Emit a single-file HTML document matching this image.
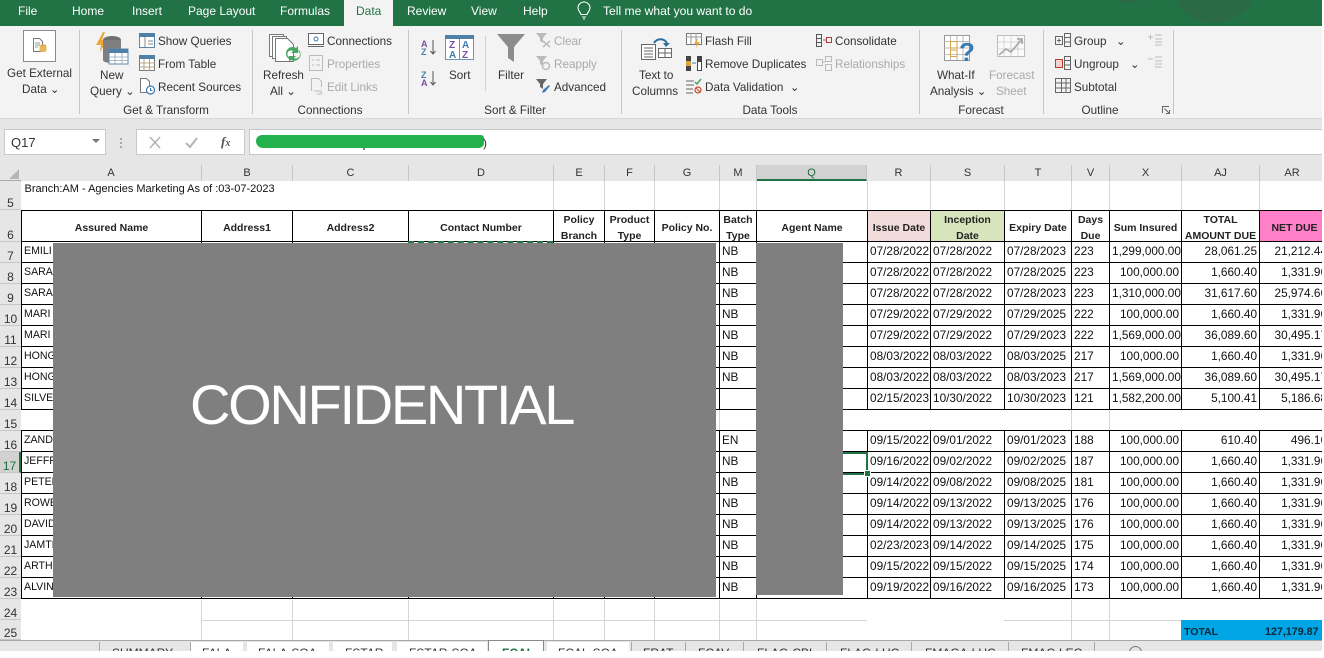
<!DOCTYPE html>
<html><head><meta charset="utf-8"><style>
html,body{margin:0;padding:0;background:#fff}
#p{position:relative;width:1324px;height:658px;overflow:hidden;background:#fff;font-family:"Liberation Sans",sans-serif;color:#222}
.a{position:absolute}
.t{position:absolute;white-space:nowrap;font-size:11.7px;line-height:16px;color:#333;margin-top:1px}
.m0{margin-top:0}
.g{color:#aaa}
.c{text-align:center;transform:translateX(-50%)}
.w{color:#fff;font-size:12px;margin-top:0}
.sep{position:absolute;top:30px;height:84px;width:1px;background:#c6c6c6}
svg{position:absolute;overflow:visible}
table{position:absolute;left:21px;top:181px;border-collapse:collapse;table-layout:fixed;width:1308px;font-size:11.8px;color:#111}
td{padding:0 2px;height:20px;line-height:16px;vertical-align:top;white-space:nowrap;overflow:hidden;border:1px solid #000}
tr:nth-child(n+3) td{padding-top:1px;height:19px}
tr:nth-child(n+3) td:first-child{font-size:10.6px}
tr.h td{height:30px;font-weight:bold;text-align:center;vertical-align:middle;color:#222;white-space:normal;font-size:10.5px;padding:0}
tr.h td div{line-height:16px;margin-bottom:-2px;position:relative;top:1px}
td.r{text-align:right}
tr.e td{border-left:1px solid #d4d4d4;border-right:1px solid #d4d4d4}
.ch{position:absolute;top:165px;height:16px;background:#e6e6e6;border-right:1px solid #c6c6c6;font-size:11px;line-height:16px;text-align:center;color:#333;box-sizing:border-box}
.rn{position:absolute;left:0;width:21px;background:#e6e6e6;border-bottom:1px solid #c6c6c6;font-size:12px;text-align:center;color:#333;box-sizing:border-box;line-height:14px}
.tab{position:absolute;top:646px;font-size:12px;line-height:14px;color:#333;white-space:nowrap}
</style></head><body><div id="p">

<!-- title bar -->
<div class="a" style="left:0;top:0;width:1324px;height:26px;background:#217346;overflow:hidden">
<div class="a" style="left:1170px;top:-65px;width:88px;height:88px;border-radius:50%;background:#2a6a45"></div>
<div class="a" style="left:1117px;top:-10px;width:26px;height:13px;border-radius:50%;background:#2a6a45"></div>
</div>
<div class="a" style="left:344px;top:0;width:49px;height:26px;background:#f3f3f3"></div>
<div class="t w" style="left:18px;top:3px">File</div>
<div class="t w" style="left:72px;top:3px">Home</div>
<div class="t w" style="left:132px;top:3px">Insert</div>
<div class="t w" style="left:188px;top:3px">Page Layout</div>
<div class="t w" style="left:280px;top:3px">Formulas</div>
<div class="t m0" style="left:356px;top:3px;color:#217346;font-size:12px">Data</div>
<div class="t w" style="left:407px;top:3px">Review</div>
<div class="t w" style="left:471px;top:3px">View</div>
<div class="t w" style="left:523px;top:3px">Help</div>
<svg style="left:577px;top:2px" width="14" height="18" viewBox="0 0 14 18" fill="none" stroke="#fff" stroke-width="1.1"><path d="M4 12.500C3.500 10 1 9 1 6a6 6 0 0 1 12 0c0 3-2.500 4-3 6.500H4zM5 15h4M6 17h2"/></svg>
<div class="t w" style="left:603px;top:3px;font-size:12.100px">Tell me what you want to do</div>

<!-- ribbon -->
<div class="a" style="left:0;top:26px;width:1324px;height:92px;background:#f3f3f3;border-bottom:1px solid #d8d8d8"></div>
<div class="a" style="left:0;top:119px;width:1324px;height:46px;background:#e6e6e6"></div>
<div class="sep" style="left:79px"></div><div class="sep" style="left:252px"></div><div class="sep" style="left:408px"></div><div class="sep" style="left:621px"></div><div class="sep" style="left:919px"></div><div class="sep" style="left:1043px"></div><div class="sep" style="left:1173px"></div>
<div class="a" style="left:485px;top:36px;width:1px;height:55px;background:#d0d0d0"></div>

<!-- Get External -->
<div class="a" style="left:23px;top:30px;width:31px;height:30px;background:#fff;border:1px solid #8a8a8a"></div>
<svg style="left:33px;top:38px" width="14" height="15" viewBox="0 0 14 15"><path d="M.5.500h6l3 3v10h-9z" fill="#fff" stroke="#777"/><path d="M2 5h5M2 7h5M2 9h3" stroke="#999"/><ellipse cx="10" cy="8" rx="3.500" ry="1.500" fill="#d9a441"/><path d="M6.500 8v4.500c0 2 7 2 7 0V8z" fill="#e3b85c"/></svg>
<div class="t" style="left:7px;top:65px">Get External</div>
<div class="t" style="left:22px;top:81px">Data ⌄</div>

<!-- New Query -->
<svg style="left:95px;top:32px" width="34" height="36" viewBox="0 0 34 36"><path d="M8 0L1 13h5l-1 7 7-12H7l3-8z" fill="#eba93a"/><ellipse cx="17" cy="8" rx="9" ry="4" fill="#6f6f6f"/><path d="M8 8v20c0 4 18 4 18 0V8z" fill="#7f7f7f"/><rect x="14" y="17" width="19" height="15" fill="#fff" stroke="#5b87ae"/><rect x="14" y="17" width="19" height="4" fill="#4f81a8"/><path d="M14 25h19M14 28.500h19M20 21v11M27 21v11" stroke="#90a8bd" stroke-width=".8"/></svg>
<div class="t" style="left:100px;top:67px">New</div>
<div class="t" style="left:90px;top:83px">Query ⌄</div>
<svg style="left:139px;top:33px" width="16" height="15" viewBox="0 0 16 15"><rect x=".5" y=".5" width="15" height="14" fill="#fff" stroke="#5f86a8"/><rect x="0" y="0" width="16" height="4" fill="#4f81a8"/><path d="M6 4v10M9 8h5M9 11h5" stroke="#888"/></svg>
<div class="t" style="left:158px;top:33px">Show Queries</div>
<svg style="left:139px;top:55px" width="16" height="16" viewBox="0 0 16 16"><rect x=".5" y=".5" width="15" height="15" fill="#fff" stroke="#7a7a7a"/><rect x="0" y="0" width="16" height="4" fill="#4f81a8"/><path d="M0 8h16M0 12h16M5 4v12M10.500 4v12" stroke="#a98d6a" stroke-width=".8"/></svg>
<div class="t" style="left:158px;top:56px">From Table</div>
<svg style="left:140px;top:78px" width="15" height="17" viewBox="0 0 15 17" fill="none"><path d="M.5.500h6l3 3v11H.5z" stroke="#777" fill="#fff"/><circle cx="10.500" cy="12" r="4" fill="#fff" stroke="#3a7ab5" stroke-width="1.200"/><path d="M10.500 10v2.500h2" stroke="#3a7ab5"/></svg>
<div class="t" style="left:158px;top:79px">Recent Sources</div>
<div class="t c" style="left:166px;top:102px">Get &amp; Transform</div>

<!-- Refresh -->
<svg style="left:269px;top:33px" width="32" height="30" viewBox="0 0 32 30" fill="#fff" stroke="#777"><path d="M.5 1.500h14v22H.5z"/><path d="M3.500 3.500h14v22h-14z"/><path d="M6.500 5.500h12l6 6v17h-18z"/><path d="M20 26a6.500 6.500 0 0 1 7-11l2-2v7h-7l2-2a3.500 3.500 0 0 0-4 6z" fill="#4aa564" stroke="none"/><path d="M30 17a6.500 6.500 0 0 1-8 10l-2 2v-6h7l-2 2a3.500 3.500 0 0 0 4-7z" fill="#4aa564" stroke="none"/></svg>
<div class="t" style="left:263px;top:67px">Refresh</div>
<div class="t" style="left:270px;top:83px">All ⌄</div>
<svg style="left:308px;top:33px" width="16" height="15" viewBox="0 0 16 15" fill="none"><rect x=".5" y=".5" width="15" height="11" fill="#fff" stroke="#666"/><circle cx="8" cy="6" r="2" stroke="#3a7ab5"/><path d="M0 13.500h16" stroke="#666"/></svg>
<div class="t" style="left:327px;top:33px">Connections</div>
<svg style="left:309px;top:55px" width="14" height="16" viewBox="0 0 14 16" fill="none" stroke="#bbb"><rect x=".5" y=".5" width="13" height="15"/><path d="M3 5h2M7 5h4M3 10h2M7 10h4"/></svg>
<div class="t g" style="left:327px;top:56px">Properties</div>
<svg style="left:311px;top:78px" width="13" height="17" viewBox="0 0 13 17" fill="none" stroke="#bbb"><path d="M.5 13V.500h7l3 3V9M3 13h7a2 2 0 0 1 0 3H6"/></svg>
<div class="t g" style="left:327px;top:79px">Edit Links</div>
<div class="t c" style="left:330px;top:102px">Connections</div>

<!-- Sort -->
<svg style="left:421px;top:39px" width="16" height="17" viewBox="0 0 16 17"><text x="0" y="8" font-size="9" font-weight="bold" fill="#7a4fa3" font-family="Liberation Sans">A</text><text x="0" y="16" font-size="9" font-weight="bold" fill="#4a7fb0" font-family="Liberation Sans">Z</text><path d="M12 1v14M9.500 12l2.500 3 2.500-3" stroke="#555" fill="none"/></svg>
<svg style="left:421px;top:70px" width="16" height="17" viewBox="0 0 16 17"><text x="0" y="8" font-size="9" font-weight="bold" fill="#4a7fb0" font-family="Liberation Sans">Z</text><text x="0" y="16" font-size="9" font-weight="bold" fill="#7a4fa3" font-family="Liberation Sans">A</text><path d="M12 1v14M9.500 12l2.500 3 2.500-3" stroke="#555" fill="none"/></svg>
<svg style="left:445px;top:35px" width="29" height="25" viewBox="0 0 29 25"><rect x=".5" y=".5" width="28" height="24" fill="#fff" stroke="#6f94b5"/><rect width="29" height="4" fill="#4f81a8"/><path d="M14.500 4v21" stroke="#6f94b5"/><g font-family="Liberation Sans" font-size="10" font-weight="bold"><text x="4" y="13" fill="#7a4fa3">Z</text><text x="4" y="23" fill="#3f7cb3">A</text><text x="17" y="13" fill="#3f7cb3">A</text><text x="17" y="23" fill="#7a4fa3">Z</text></g></svg>
<div class="t" style="left:449px;top:67px">Sort</div>

<!-- Filter -->
<svg style="left:497px;top:34px" width="28" height="28" viewBox="0 0 28 28"><path d="M0 0h28L17 13v15l-6-4V13z" fill="#8c8c8c"/></svg>
<div class="t" style="left:498px;top:67px">Filter</div>
<svg style="left:536px;top:33px" width="15" height="15" viewBox="0 0 15 15"><path d="M0 0h11L7 5v5L4 8V5z" fill="#bbb"/><path d="M7 8l7 6M14 8l-7 6" stroke="#bbb" stroke-width="1.500"/></svg>
<div class="t g" style="left:554px;top:33px">Clear</div>
<svg style="left:536px;top:56px" width="15" height="15" viewBox="0 0 15 15"><path d="M0 0h11L7 5v5L4 8V5z" fill="#bbb"/><circle cx="10" cy="10" r="3.500" fill="none" stroke="#bbb" stroke-width="1.500"/></svg>
<div class="t g" style="left:554px;top:56px">Reapply</div>
<svg style="left:536px;top:79px" width="15" height="15" viewBox="0 0 15 15"><path d="M0 0h11L7 5v5L4 8V5z" fill="#666"/><path d="M6 14l1-3 6-5 1 1-5 6z" fill="#3a7ab5"/></svg>
<div class="t" style="left:554px;top:79px">Advanced</div>
<div class="t c" style="left:515px;top:102px">Sort &amp; Filter</div>

<!-- Text to columns -->
<svg style="left:641px;top:34px" width="31" height="26" viewBox="0 0 31 26" fill="none"><path d="M13 9a7.500 7.500 0 0 1 13 0" stroke="#2f6f9f" stroke-width="2"/><path d="M22 9h7l-4 4z" fill="#2f6f9f"/><rect x=".5" y="10.500" width="14" height="15" fill="#fff" stroke="#666"/><path d="M3 14h9M3 17h9M3 20h9M3 23h9" stroke="#666"/><rect x="17.500" y="14.500" width="13" height="9" stroke="#666" fill="#fff"/><path d="M17.500 19h13M24 14.500v9" stroke="#666"/></svg>
<div class="t" style="left:639px;top:67px">Text to</div>
<div class="t" style="left:632px;top:83px">Columns</div>
<svg style="left:686px;top:33px" width="16" height="15" viewBox="0 0 16 15" fill="none"><rect x=".5" y=".5" width="15" height="11" fill="#fff" stroke="#777"/><path d="M0 4h16M5 0v11M10 0v11" stroke="#999"/><path d="M11 6L8 11h3l-1 4 4-6h-3l1-3z" fill="#eba93a"/></svg>
<div class="t" style="left:705px;top:33px">Flash Fill</div>
<svg style="left:686px;top:56px" width="16" height="15" viewBox="0 0 16 15"><rect x="0" y="0" width="5" height="15" fill="#444"/><rect x="0" y="5" width="5" height="5" fill="#d9a441"/><rect x="11" y="0" width="5" height="15" fill="#444"/><rect x="12" y="6" width="3" height="8" fill="#fff"/><path d="M6 7h4" stroke="#3a7ab5"/></svg>
<div class="t" style="left:705px;top:56px">Remove Duplicates</div>
<svg style="left:686px;top:78px" width="16" height="16" viewBox="0 0 16 16" fill="none"><path d="M0 3h8M0 7h8M0 11h7M0 15h7" stroke="#666"/><path d="M9 4l2 2 4-5" stroke="#4aa564" stroke-width="1.500"/><circle cx="12" cy="12" r="3" stroke="#d0432b" stroke-width="1.200"/><path d="M10 10l4 4" stroke="#d0432b"/></svg>
<div class="t" style="left:705px;top:79px">Data Validation &nbsp;⌄</div>
<div class="t c" style="left:770px;top:102px">Data Tools</div>
<svg style="left:816px;top:34px" width="16" height="13" viewBox="0 0 16 13" fill="none"><rect x=".5" y=".5" width="5" height="12" stroke="#555"/><path d="M0 4.500h6M0 8.500h6" stroke="#555"/><rect x="10.500" y="3.500" width="5" height="5" stroke="#c0392b"/><path d="M7 6h3" stroke="#3a7ab5"/></svg>
<div class="t" style="left:835px;top:33px">Consolidate</div>
<svg style="left:816px;top:56px" width="16" height="15" viewBox="0 0 16 15" fill="none" stroke="#bbb"><rect x=".5" y="3.500" width="6" height="6"/><rect x="9.500" y=".5" width="6" height="5"/><rect x="9.500" y="8.500" width="6" height="6"/><path d="M7 6h2"/></svg>
<div class="t g" style="left:835px;top:56px">Relationships</div>

<!-- Forecast -->
<svg style="left:944px;top:35px" width="30" height="29" viewBox="0 0 30 29" fill="none"><rect x=".5" y=".5" width="25" height="25" fill="#fff" stroke="#999"/><path d="M0 6.500h25M0 13h25M0 19.500h25M6.500 0v25M13 0v25M19 0v25" stroke="#aaa" stroke-width=".8"/><rect x="6.500" y="6.500" width="6.500" height="6.500" stroke="#d9a441"/><rect x="6.500" y="15" width="6.500" height="6.500" stroke="#d9a441"/><text x="15" y="26" font-size="26" font-weight="bold" fill="#3a7ab5" font-family="Liberation Sans">?</text></svg>
<div class="t" style="left:937px;top:67px">What-If</div>
<div class="t" style="left:930px;top:83px">Analysis ⌄</div>
<svg style="left:997px;top:35px" width="28" height="25" viewBox="0 0 28 25" fill="none"><rect x=".5" y=".5" width="27" height="21" fill="#fafafa" stroke="#bbb"/><path d="M0 7h27M0 14h27M7 0v21M14 0v21M21 0v21" stroke="#ccc" stroke-width=".8"/><path d="M2 20l7-6 5 3 11-13M20 4h5v5" stroke="#aaa" stroke-width="1.800"/></svg>
<div class="t g" style="left:989px;top:67px">Forecast</div>
<div class="t g" style="left:996px;top:83px">Sheet</div>
<div class="t c" style="left:981px;top:102px">Forecast</div>

<!-- Outline -->
<svg style="left:1055px;top:33px" width="16" height="14" viewBox="0 0 16 14" fill="none" stroke="#666"><rect x=".5" y="3.500" width="7" height="8"/><path d="M2 7.500h4M4 5.500v4M9.500.500h6v13h-6zM9.500 4.500h6M9.500 9h6"/></svg>
<div class="t" style="left:1074px;top:33px">Group</div><div class="t" style="left:1116px;top:33px">⌄</div>
<svg style="left:1055px;top:56px" width="16" height="14" viewBox="0 0 16 14" fill="none" stroke="#666"><rect x=".5" y="3.500" width="7" height="8" fill="#f6d5d0" stroke="#c0392b"/><path d="M9.500.500h6v13h-6zM9.500 4.500h6M9.500 9h6"/></svg>
<div class="t" style="left:1074px;top:56px">Ungroup</div><div class="t" style="left:1130px;top:56px">⌄</div>
<svg style="left:1055px;top:78px" width="16" height="15" viewBox="0 0 16 15" fill="none" stroke="#666"><rect x=".5" y=".5" width="6" height="14"/><rect x="6.500" y=".5" width="9" height="14"/><path d="M0 5h16M0 10h16M11 0v15"/></svg>
<div class="t" style="left:1074px;top:79px">Subtotal</div>
<svg style="left:1148px;top:34px" width="14" height="13" viewBox="0 0 14 13" fill="none" stroke="#bbb"><path d="M0 3h5M2.500 .5v5M7 1h7M7 5h7M7 8h7M7 11h7"/></svg>
<svg style="left:1148px;top:56px" width="14" height="13" viewBox="0 0 14 13" fill="none" stroke="#bbb"><path d="M0 3h5M7 1h7M7 5h7M7 8h7M7 11h7"/></svg>
<div class="t c" style="left:1100px;top:102px">Outline</div>
<svg style="left:1162px;top:106px" width="8" height="8" viewBox="0 0 8 8" fill="none" stroke="#666"><path d="M.5 7V.500H7M2.500 2.500l5 5M4 7.500h3.500V4"/></svg>

<!-- formula bar -->
<div class="a" style="left:4px;top:129px;width:100px;height:24px;background:#fff;border:1px solid #c8c8c8"></div>
<div class="t m0" style="left:11px;top:135px;font-size:13px">Q17</div>
<div class="a" style="left:92px;top:139px;width:0;height:0;border:4px solid transparent;border-top:4px solid #777"></div>
<div class="a" style="left:120px;top:138px;width:2px;height:2px;background:#aaa;box-shadow:0 4px 0 #aaa,0 8px 0 #aaa"></div>
<div class="a" style="left:136px;top:129px;width:107px;height:24px;background:#fff;border:1px solid #c8c8c8"></div>
<svg style="left:149px;top:137px" width="12" height="11" viewBox="0 0 12 11" fill="none" stroke="#b5b5b5" stroke-width="1.600"><path d="M1 0l10 11M11 0L1 11"/></svg>
<svg style="left:185px;top:137px" width="13" height="11" viewBox="0 0 13 11" fill="none" stroke="#b5b5b5" stroke-width="2"><path d="M1 6l4 4 7-9"/></svg>
<div class="t m0" style="left:221px;top:134px;font:italic bold 13px/16px 'Liberation Serif',serif;color:#555">f<span style="font-size:10px">x</span></div>
<div class="a" style="left:249px;top:129px;width:1075px;height:24px;background:#fff;border:1px solid #c8c8c8"></div>
<div class="a" style="left:256px;top:135px;width:228px;height:13px;background:#22b14c;border-radius:6px 3px 5px 7px"></div>
<div class="t m0" style="left:483px;top:135px;font-size:12px">)</div>
<div class="a" style="left:363px;top:148px;width:2px;height:2px;background:#888"></div>

<!-- grid area -->
<div class="a" style="left:0;top:165px;width:1324px;height:16px;background:#e6e6e6;border-bottom:1px solid #a8a8a8;box-sizing:border-box"></div>
<svg style="left:0;top:165px" width="21" height="16"><path d="M19 4v10H9z" fill="#b6b6b6"/></svg>
<div class="ch" style="left:21px;width:181px">A</div>
<div class="ch" style="left:202px;width:91px">B</div>
<div class="ch" style="left:293px;width:116px">C</div>
<div class="ch" style="left:409px;width:145px">D</div>
<div class="ch" style="left:554px;width:51px">E</div>
<div class="ch" style="left:605px;width:50px">F</div>
<div class="ch" style="left:655px;width:65px">G</div>
<div class="ch" style="left:720px;width:37px">M</div>
<div class="ch" style="left:757px;width:110px;background:#d2d2d2;border-bottom:2px solid #217346;color:#1d6a40">Q</div>
<div class="ch" style="left:867px;width:64px">R</div>
<div class="ch" style="left:931px;width:74px">S</div>
<div class="ch" style="left:1005px;width:67px">T</div>
<div class="ch" style="left:1072px;width:38px">V</div>
<div class="ch" style="left:1110px;width:72px">X</div>
<div class="ch" style="left:1182px;width:78px">AJ</div>
<div class="ch" style="left:1260px;width:64px;border-right:0">AR</div>

<div class="rn" style="top:181px;height:29px;padding-top:15px">5</div>
<div class="rn" style="top:210px;height:32px;padding-top:18px">6</div>
<div class="rn" style="top:242px;height:21px;padding-top:7px">7</div>
<div class="rn" style="top:263px;height:21px;padding-top:7px">8</div>
<div class="rn" style="top:284px;height:21px;padding-top:7px">9</div>
<div class="rn" style="top:305px;height:21px;padding-top:7px">10</div>
<div class="rn" style="top:326px;height:21px;padding-top:7px">11</div>
<div class="rn" style="top:347px;height:21px;padding-top:7px">12</div>
<div class="rn" style="top:368px;height:21px;padding-top:7px">13</div>
<div class="rn" style="top:389px;height:21px;padding-top:7px">14</div>
<div class="rn" style="top:410px;height:21px;padding-top:7px">15</div>
<div class="rn" style="top:431px;height:21px;padding-top:7px">16</div>
<div class="rn" style="top:452px;height:21px;padding-top:7px;background:#d2d2d2;border-right:2px solid #217346;color:#1d6a40">17</div>
<div class="rn" style="top:473px;height:21px;padding-top:7px">18</div>
<div class="rn" style="top:494px;height:21px;padding-top:7px">19</div>
<div class="rn" style="top:515px;height:21px;padding-top:7px">20</div>
<div class="rn" style="top:536px;height:21px;padding-top:7px">21</div>
<div class="rn" style="top:557px;height:21px;padding-top:7px">22</div>
<div class="rn" style="top:578px;height:21px;padding-top:7px">23</div>
<div class="rn" style="top:599px;height:21px;padding-top:7px">24</div>
<div class="rn" style="top:620px;height:20px;padding-top:6px">25</div>

<table>
<colgroup><col style="width:180px"><col style="width:91px"><col style="width:116px"><col style="width:145px"><col style="width:51px"><col style="width:50px"><col style="width:65px"><col style="width:37px"><col style="width:111px"><col style="width:63px"><col style="width:74px"><col style="width:67px"><col style="width:38px"><col style="width:72px"><col style="width:78px"><col style="width:70px"></colgroup>
<tr style="height:29px"><td colspan="4" style="border:0;border-bottom:1px solid #000;font-size:11px;line-height:15px;height:27px;padding:1px 2px 0 3px">Branch:AM - Agencies Marketing As of :03-07-2023</td><td style="border-color:#d4d4d4;border-bottom-color:#000;border-top:0"></td><td style="border-color:#d4d4d4;border-bottom-color:#000;border-top:0"></td><td style="border-color:#d4d4d4;border-bottom-color:#000;border-top:0"></td><td style="border-color:#d4d4d4;border-bottom-color:#000;border-top:0"></td><td style="border-color:#d4d4d4;border-bottom-color:#000;border-top:0"></td><td style="border-color:#d4d4d4;border-bottom-color:#000;border-top:0"></td><td style="border-color:#d4d4d4;border-bottom-color:#000;border-top:0"></td><td style="border-color:#d4d4d4;border-bottom-color:#000;border-top:0"></td><td style="border-color:#d4d4d4;border-bottom-color:#000;border-top:0"></td><td style="border-color:#d4d4d4;border-bottom-color:#000;border-top:0"></td><td style="border-color:#d4d4d4;border-bottom-color:#000;border-top:0"></td><td style="border-color:#d4d4d4;border-bottom-color:#000;border-top:0"></td></tr>
<tr class="h"><td><div>Assured Name</div></td><td><div>Address1</div></td><td><div>Address2</div></td><td><div>Contact Number</div></td><td><div>Policy Branch</div></td><td><div>Product Type</div></td><td><div>Policy No.</div></td><td><div>Batch Type</div></td><td><div>Agent Name</div></td><td style="background:#f2dcdb"><div>Issue Date</div></td><td style="background:#d8e4bc"><div>Inception<br>Date</div></td><td><div>Expiry Date</div></td><td><div>Days Due</div></td><td><div>Sum Insured</div></td><td><div>TOTAL AMOUNT DUE</div></td><td style="background:#ff7fc8"><div>NET DUE</div></td></tr>
<tr><td>EMILI</td><td></td><td></td><td></td><td></td><td></td><td></td><td>NB</td><td></td><td>07/28/2022</td><td>07/28/2022</td><td>07/28/2023</td><td>223</td><td class="r">1,299,000.00</td><td class="r">28,061.25</td><td class="r">21,212.44</td></tr>
<tr><td>SARA</td><td></td><td></td><td></td><td></td><td></td><td></td><td>NB</td><td></td><td>07/28/2022</td><td>07/28/2022</td><td>07/28/2025</td><td>223</td><td class="r">100,000.00</td><td class="r">1,660.40</td><td class="r">1,331.96</td></tr>
<tr><td>SARA</td><td></td><td></td><td></td><td></td><td></td><td></td><td>NB</td><td></td><td>07/28/2022</td><td>07/28/2022</td><td>07/28/2023</td><td>223</td><td class="r">1,310,000.00</td><td class="r">31,617.60</td><td class="r">25,974.66</td></tr>
<tr><td>MARI</td><td></td><td></td><td></td><td></td><td></td><td></td><td>NB</td><td></td><td>07/29/2022</td><td>07/29/2022</td><td>07/29/2025</td><td>222</td><td class="r">100,000.00</td><td class="r">1,660.40</td><td class="r">1,331.96</td></tr>
<tr><td>MARI</td><td></td><td></td><td></td><td></td><td></td><td></td><td>NB</td><td></td><td>07/29/2022</td><td>07/29/2022</td><td>07/29/2023</td><td>222</td><td class="r">1,569,000.00</td><td class="r">36,089.60</td><td class="r">30,495.17</td></tr>
<tr><td>HONG</td><td></td><td></td><td></td><td></td><td></td><td></td><td>NB</td><td></td><td>08/03/2022</td><td>08/03/2022</td><td>08/03/2025</td><td>217</td><td class="r">100,000.00</td><td class="r">1,660.40</td><td class="r">1,331.96</td></tr>
<tr><td>HONG</td><td></td><td></td><td></td><td></td><td></td><td></td><td>NB</td><td></td><td>08/03/2022</td><td>08/03/2022</td><td>08/03/2023</td><td>217</td><td class="r">1,569,000.00</td><td class="r">36,089.60</td><td class="r">30,495.17</td></tr>
<tr><td>SILVE</td><td></td><td></td><td></td><td></td><td></td><td></td><td></td><td></td><td>02/15/2023</td><td>10/30/2022</td><td>10/30/2023</td><td>121</td><td class="r">1,582,200.00</td><td class="r">5,100.41</td><td class="r">5,186.68</td></tr>
<tr class="e"><td style="border-left:0;border-right:0"></td><td style="border-left:0;border-right:0"></td><td style="border-left:0;border-right:0"></td><td style="border-left:0;border-right:0"></td><td style="border-left:0;border-right:0"></td><td style="border-left:0;border-right:0"></td><td style="border-left:0"></td><td></td><td style="border-right:0"></td><td style="border-left:0;border-right:0"></td><td style="border-left:0;border-right:0"></td><td style="border-left:0"></td><td></td><td style="border-left:0;border-right:0"></td><td style="border-left:0;border-right:0"></td><td style="border-left:0;border-right:0"></td></tr>
<tr><td>ZAND</td><td></td><td></td><td></td><td></td><td></td><td></td><td>EN</td><td></td><td>09/15/2022</td><td>09/01/2022</td><td>09/01/2023</td><td>188</td><td class="r">100,000.00</td><td class="r">610.40</td><td class="r">496.16</td></tr>
<tr><td>JEFFR</td><td></td><td></td><td></td><td></td><td></td><td></td><td>NB</td><td></td><td>09/16/2022</td><td>09/02/2022</td><td>09/02/2025</td><td>187</td><td class="r">100,000.00</td><td class="r">1,660.40</td><td class="r">1,331.96</td></tr>
<tr><td>PETER</td><td></td><td></td><td></td><td></td><td></td><td></td><td>NB</td><td></td><td>09/14/2022</td><td>09/08/2022</td><td>09/08/2025</td><td>181</td><td class="r">100,000.00</td><td class="r">1,660.40</td><td class="r">1,331.96</td></tr>
<tr><td>ROWE</td><td></td><td></td><td></td><td></td><td></td><td></td><td>NB</td><td></td><td>09/14/2022</td><td>09/13/2022</td><td>09/13/2025</td><td>176</td><td class="r">100,000.00</td><td class="r">1,660.40</td><td class="r">1,331.96</td></tr>
<tr><td>DAVID</td><td></td><td></td><td></td><td></td><td></td><td></td><td>NB</td><td></td><td>09/14/2022</td><td>09/13/2022</td><td>09/13/2025</td><td>176</td><td class="r">100,000.00</td><td class="r">1,660.40</td><td class="r">1,331.96</td></tr>
<tr><td>JAMTI</td><td></td><td></td><td></td><td></td><td></td><td></td><td>NB</td><td></td><td>02/23/2023</td><td>09/14/2022</td><td>09/14/2025</td><td>175</td><td class="r">100,000.00</td><td class="r">1,660.40</td><td class="r">1,331.96</td></tr>
<tr><td>ARTH</td><td></td><td></td><td></td><td></td><td></td><td></td><td>NB</td><td></td><td>09/15/2022</td><td>09/15/2022</td><td>09/15/2025</td><td>174</td><td class="r">100,000.00</td><td class="r">1,660.40</td><td class="r">1,331.96</td></tr>
<tr><td>ALVIN</td><td></td><td></td><td></td><td></td><td></td><td></td><td>NB</td><td></td><td>09/19/2022</td><td>09/16/2022</td><td>09/16/2025</td><td>173</td><td class="r">100,000.00</td><td class="r">1,660.40</td><td class="r">1,331.96</td></tr>
</table>

<!-- gridlines rows 24-25 -->
<div class="a" style="left:201px;top:620px;width:666px;height:1px;background:#d4d4d4"></div>
<div class="a" style="left:1004px;top:620px;width:177px;height:1px;background:#d4d4d4"></div>
<div class="a" style="left:201px;top:600px;width:1px;height:40px;background:#d4d4d4"></div>
<div class="a" style="left:292px;top:600px;width:1px;height:40px;background:#d4d4d4"></div>
<div class="a" style="left:408px;top:600px;width:1px;height:40px;background:#d4d4d4"></div>
<div class="a" style="left:553px;top:600px;width:1px;height:40px;background:#d4d4d4"></div>
<div class="a" style="left:604px;top:600px;width:1px;height:40px;background:#d4d4d4"></div>
<div class="a" style="left:654px;top:600px;width:1px;height:40px;background:#d4d4d4"></div>
<div class="a" style="left:719px;top:600px;width:1px;height:40px;background:#d4d4d4"></div>
<div class="a" style="left:756px;top:600px;width:1px;height:40px;background:#d4d4d4"></div>
<div class="a" style="left:1071px;top:600px;width:1px;height:40px;background:#d4d4d4"></div>
<div class="a" style="left:1109px;top:600px;width:1px;height:40px;background:#d4d4d4"></div>
<div class="a" style="left:1181px;top:620px;width:143px;height:20px;background:#00a5e5"></div>
<div class="t m0" style="left:1184px;top:625px;font-size:10.500px;font-weight:bold;line-height:15px;color:#0a2a3a">TOTAL</div>
<div class="t m0" style="left:1265px;top:625px;font-size:10.700px;font-weight:bold;line-height:15px;color:#0a2a3a">127,179.87</div>

<!-- selection & marching ants -->
<div class="a" style="left:408px;top:241px;width:145px;height:0;border-top:2px dashed #217346"></div>
<div class="a" style="left:843px;top:452px;width:23px;height:19px;border:2px solid #217346;border-left:0"></div>
<div class="a" style="left:864px;top:470px;width:5px;height:5px;background:#217346;border:1px solid #fff"></div>

<!-- confidential blocks -->
<div class="a" style="left:53px;top:243px;width:663px;height:354px;background:#7f7f7f"></div>
<div class="a" style="left:756px;top:243px;width:87px;height:352px;background:#7f7f7f"></div>
<div class="a" style="left:190px;top:372px;font-size:56px;line-height:66px;color:#fff;letter-spacing:-2.300px;white-space:nowrap">CONFIDENTIAL</div>

<!-- sheet tabs -->
<div class="a" style="left:0;top:640px;width:1324px;height:11px;background:#e6e6e6;border-top:1px solid #a8a8a8;box-sizing:border-box"></div>
<div class="a" style="left:191px;top:642px;width:52px;height:9px;background:#fff"></div>
<div class="a" style="left:247px;top:642px;width:82px;height:9px;background:#fff"></div>
<div class="a" style="left:333px;top:642px;width:59px;height:9px;background:#fff"></div>
<div class="a" style="left:397px;top:642px;width:90px;height:9px;background:#fff"></div>
<div class="a" style="left:488px;top:640px;width:56px;height:11px;background:#fff;border:1px solid #8a8a8a;border-bottom:0;box-sizing:border-box"></div>
<div class="a" style="left:547px;top:642px;width:82px;height:9px;background:#fff"></div>
<div class="a" style="left:99px;top:642px;width:1px;height:9px;background:#a9a9a9"></div>
<div class="a" style="left:190px;top:642px;width:1px;height:9px;background:#a9a9a9"></div>
<div class="a" style="left:631px;top:642px;width:1px;height:9px;background:#a9a9a9"></div>
<div class="a" style="left:685px;top:642px;width:1px;height:9px;background:#a9a9a9"></div>
<div class="a" style="left:743px;top:642px;width:1px;height:9px;background:#a9a9a9"></div>
<div class="a" style="left:826px;top:642px;width:1px;height:9px;background:#a9a9a9"></div>
<div class="a" style="left:911px;top:642px;width:1px;height:9px;background:#a9a9a9"></div>
<div class="a" style="left:1008px;top:642px;width:1px;height:9px;background:#a9a9a9"></div>
<div class="a" style="left:1094px;top:642px;width:1px;height:9px;background:#a9a9a9"></div>
<div class="tab" style="left:112px">SUMMARY</div>
<div class="tab" style="left:202px">FALA</div>
<div class="tab" style="left:258px">FALA-SOA</div>
<div class="tab" style="left:345px">FSTAR</div>
<div class="tab" style="left:409px">FSTAR-SOA</div>
<div class="tab" style="left:502px;color:#217346;font-weight:bold">FCAL</div>
<div class="tab" style="left:558px">FCAL-SOA</div>
<div class="tab" style="left:643px">FRAT</div>
<div class="tab" style="left:698px">FCAV</div>
<div class="tab" style="left:757px">FLAG-CBL</div>
<div class="tab" style="left:840px">FLAG-LUC</div>
<div class="tab" style="left:925px">FMAGA-LUC</div>
<div class="tab" style="left:1021px">FMAC-LEC</div>
<div class="a" style="left:1129px;top:646px;width:13px;height:13px;border:1px solid #777;border-radius:50%;box-sizing:border-box"></div>
<div class="a" style="left:0;top:651px;width:1324px;height:7px;background:#fff"></div>
<div class="a" style="left:1322px;top:0;width:2px;height:658px;background:#fff"></div>
</div></body></html>
